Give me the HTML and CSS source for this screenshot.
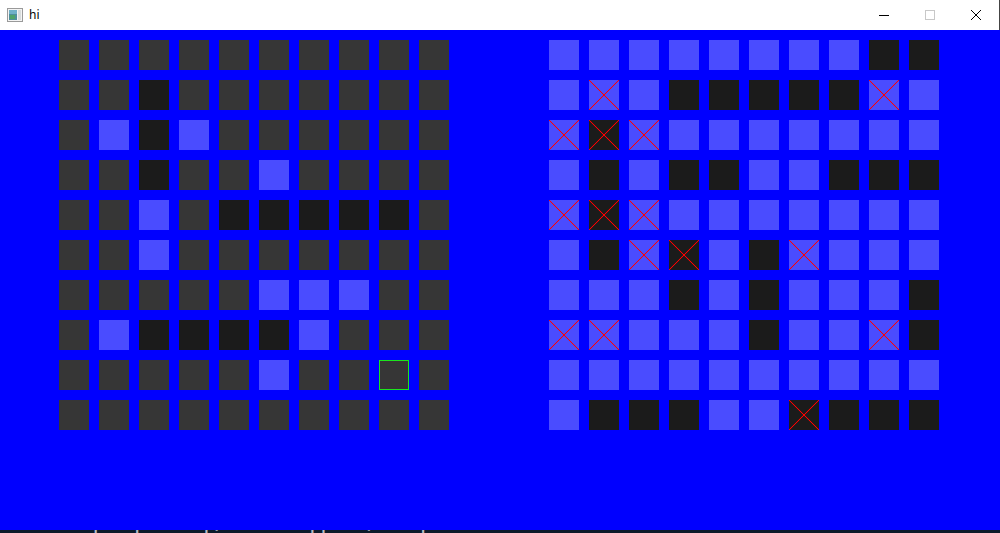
FILE: index.html
```html
<!doctype html>
<html>
<head>
<meta charset="UTF-8">
<title>hi</title>
<link rel="stylesheet" href="styles.css">
</head>
<body>
<div class="titlebar">
  <svg class="appicon" width="16" height="14" viewBox="0 0 16 14">
    <rect x="0.5" y="0.5" width="15" height="13" fill="#f4f4f4" stroke="#9a9a9a"/>
    <rect x="2" y="2" width="8" height="10" fill="#4f8f9a"/>
    <rect x="2" y="2" width="8" height="4" fill="#6fb0c8"/>
    <rect x="3" y="7" width="5" height="4" fill="#4ea36a"/>
    <rect x="11" y="2" width="3" height="10" fill="#d8dcdc"/>
  </svg>
  <span class="title">hi</span>
  <div class="controls">
    <span class="btn"><svg width="10" height="10" viewBox="0 0 10 10"><path d="M0 5.5h10" stroke="#000" stroke-width="1"/></svg></span>
    <span class="btn"><svg width="10" height="10" viewBox="0 0 10 10"><rect x="0.5" y="0.5" width="9" height="9" fill="none" stroke="#c8c8c8"/></svg></span>
    <span class="btn"><svg width="10" height="10" viewBox="0 0 10 10"><path d="M0 0L10 10M10 0L0 10" stroke="#000" stroke-width="1"/></svg></span>
  </div>
</div>

<div class="board">
  <div class="grid">
    <i class="d"></i><i class="d"></i><i class="d"></i><i class="d"></i><i class="d"></i><i class="d"></i><i class="d"></i><i class="d"></i><i class="d"></i><i class="d"></i>
    <i class="d"></i><i class="d"></i><i class="b"></i><i class="d"></i><i class="d"></i><i class="d"></i><i class="d"></i><i class="d"></i><i class="d"></i><i class="d"></i>
    <i class="d"></i><i class="l"></i><i class="b"></i><i class="l"></i><i class="d"></i><i class="d"></i><i class="d"></i><i class="d"></i><i class="d"></i><i class="d"></i>
    <i class="d"></i><i class="d"></i><i class="b"></i><i class="d"></i><i class="d"></i><i class="l"></i><i class="d"></i><i class="d"></i><i class="d"></i><i class="d"></i>
    <i class="d"></i><i class="d"></i><i class="l"></i><i class="d"></i><i class="b"></i><i class="b"></i><i class="b"></i><i class="b"></i><i class="b"></i><i class="d"></i>
    <i class="d"></i><i class="d"></i><i class="l"></i><i class="d"></i><i class="d"></i><i class="d"></i><i class="d"></i><i class="d"></i><i class="d"></i><i class="d"></i>
    <i class="d"></i><i class="d"></i><i class="d"></i><i class="d"></i><i class="d"></i><i class="l"></i><i class="l"></i><i class="l"></i><i class="d"></i><i class="d"></i>
    <i class="d"></i><i class="l"></i><i class="b"></i><i class="b"></i><i class="b"></i><i class="b"></i><i class="l"></i><i class="d"></i><i class="d"></i><i class="d"></i>
    <i class="d"></i><i class="d"></i><i class="d"></i><i class="d"></i><i class="d"></i><i class="l"></i><i class="d"></i><i class="d"></i><i class="d sel"></i><i class="d"></i>
    <i class="d"></i><i class="d"></i><i class="d"></i><i class="d"></i><i class="d"></i><i class="d"></i><i class="d"></i><i class="d"></i><i class="d"></i><i class="d"></i>
  </div>

  <div class="grid">
    <i class="l"></i><i class="l"></i><i class="l"></i><i class="l"></i><i class="l"></i><i class="l"></i><i class="l"></i><i class="l"></i><i class="b"></i><i class="b"></i>
    <i class="l"></i><i class="l x"></i><i class="l"></i><i class="b"></i><i class="b"></i><i class="b"></i><i class="b"></i><i class="b"></i><i class="l x"></i><i class="l"></i>
    <i class="l x"></i><i class="b x"></i><i class="l x"></i><i class="l"></i><i class="l"></i><i class="l"></i><i class="l"></i><i class="l"></i><i class="l"></i><i class="l"></i>
    <i class="l"></i><i class="b"></i><i class="l"></i><i class="b"></i><i class="b"></i><i class="l"></i><i class="l"></i><i class="b"></i><i class="b"></i><i class="b"></i>
    <i class="l x"></i><i class="b x"></i><i class="l x"></i><i class="l"></i><i class="l"></i><i class="l"></i><i class="l"></i><i class="l"></i><i class="l"></i><i class="l"></i>
    <i class="l"></i><i class="b"></i><i class="l x"></i><i class="b x"></i><i class="l"></i><i class="b"></i><i class="l x"></i><i class="l"></i><i class="l"></i><i class="l"></i>
    <i class="l"></i><i class="l"></i><i class="l"></i><i class="b"></i><i class="l"></i><i class="b"></i><i class="l"></i><i class="l"></i><i class="l"></i><i class="b"></i>
    <i class="l x"></i><i class="l x"></i><i class="l"></i><i class="l"></i><i class="l"></i><i class="b"></i><i class="l"></i><i class="l"></i><i class="l x"></i><i class="b"></i>
    <i class="l"></i><i class="l"></i><i class="l"></i><i class="l"></i><i class="l"></i><i class="l"></i><i class="l"></i><i class="l"></i><i class="l"></i><i class="l"></i>
    <i class="l"></i><i class="b"></i><i class="b"></i><i class="b"></i><i class="l"></i><i class="l"></i><i class="b x"></i><i class="b"></i><i class="b"></i><i class="b"></i>
  </div>
</div>

<div class="console"><p>ny rounds depending on the input</p></div>
</body>
</html>
```

FILE: styles.css
```css
html,body{margin:0;padding:0;}
body{width:1000px;height:533px;overflow:hidden;background:#0c1a2a;font-family:"Noto Sans","DejaVu Sans",sans-serif;}

/* window title bar */
.titlebar{height:30px;background:#fff;display:flex;align-items:center;border-right:1px solid #444;box-sizing:border-box;}
.appicon{margin-left:7px;display:block;}
.title{margin-left:6px;font-size:12px;color:#000;line-height:1;}
.controls{margin-left:auto;display:flex;}
.btn{width:46px;height:30px;display:flex;align-items:center;justify-content:center;}

/* game boards */
.board{height:500px;background:#0000ff;display:flex;gap:100px;padding:10px 0 0 59px;box-sizing:border-box;}
.grid{display:grid;grid-template-columns:repeat(10,30px);grid-auto-rows:30px;gap:10px;}
.grid i{display:block;}
.d{background:#363636;}
.b{background:#1b1b1b;}
.l{background:#4a4cff;}
.sel{box-shadow:inset 0 0 0 1px #1de51d;}
.x{background-image:
  linear-gradient(to top right,transparent calc(50% - .8px),#ff0000 50%,transparent calc(50% + .8px)),
  linear-gradient(to bottom right,transparent calc(50% - .8px),#ff0000 50%,transparent calc(50% + .8px));}

/* console text peeking out below the window */
.console{height:3px;overflow:hidden;}
.console p{margin:-3px 0 0 -12px;font:23px/1 "DejaVu Sans Mono",monospace;color:#b8bcc4;white-space:pre;}
```
